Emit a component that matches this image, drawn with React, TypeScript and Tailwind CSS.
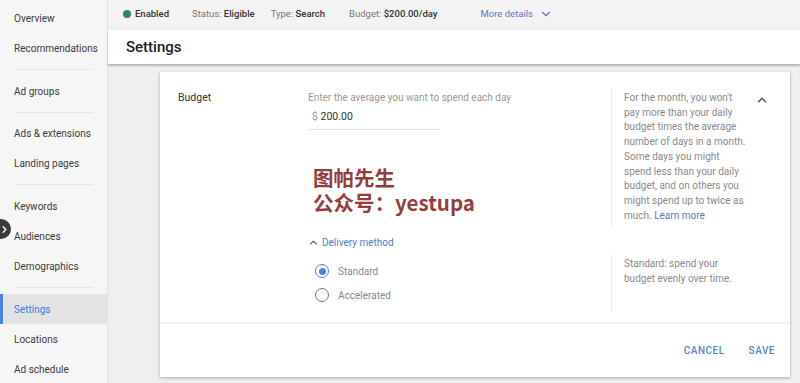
import { ChevronDown, ChevronUp, ChevronRight } from "lucide-react";

const navGroups: string[][] = [
  ["Overview", "Recommendations"],
  ["Ad groups"],
  ["Ads & extensions", "Landing pages"],
  ["Keywords", "Audiences", "Demographics"],
  ["Settings", "Locations", "Ad schedule"],
];

// help text lines, wrapped like the reference
const budgetHelp = [
  "For the month, you won't",
  "pay more than your daily",
  "budget times the average",
  "number of days in a month.",
  "Some days you might",
  "spend less than your daily",
  "budget, and on others you",
  "might spend up to twice as",
];

function Sidebar() {
  return (
    <div className="w-[108px] shrink-0 bg-[#f6f6f6] border-r border-[#e2e2e2] pt-[3px] flex flex-col">
      {navGroups.map((group, gi) => (
        <div key={gi} className="flex flex-col">
          {gi > 0 && (
            <div className={`${gi === 2 ? "h-[12px]" : "h-[13px]"} flex items-center px-[14px]`}>
              <div className="h-px w-full bg-[#e6e6e6]" />
            </div>
          )}
          {group.map((item) => {
            const active = item === "Settings";
            return (
              <div
                key={item}
                className={`h-[30px] flex items-center pl-[14px] text-[10px] relative ${
                  active ? "bg-[#e3e3e3] text-[#3f7be0]" : "text-[#3c3c3c]"
                }`}
              >
                {active && <div className="absolute left-0 top-0 bottom-0 w-[3px] bg-[#4a82e6]" />}
                {item}
              </div>
            );
          })}
        </div>
      ))}
    </div>
  );
}

function StatusBar() {
  return (
    <div className="h-[28px] flex items-center pl-[15px] text-[9.5px] text-[#777] bg-[#f3f3f3]">
      <span className="w-[8px] h-[8px] rounded-full bg-[#2e8b57] mr-[4px]" />
      <span className="text-[#333] font-medium">Enabled</span>
      <span className="ml-[23px]">
        Status: <span className="text-[#333] font-medium">Eligible</span>
      </span>
      <span className="ml-[16px]">
        Type: <span className="text-[#333] font-medium">Search</span>
      </span>
      <span className="ml-[24px]">
        Budget: <span className="text-[#333] font-medium">$200.00/day</span>
      </span>
      <span className="ml-[43px] text-[#5b7ac4] flex items-center">
        More details
        <ChevronDown size={14} strokeWidth={2} className="ml-[6px] text-[#5b7ac4]" />
      </span>
    </div>
  );
}

function Radio({ checked, label }: { checked: boolean; label: string }) {
  return (
    <div className="flex items-center h-[24px]">
      <div
        className={`w-[14px] h-[14px] rounded-full border-[1.5px] flex items-center justify-center ${
          checked ? "border-[#4a82e6]" : "border-[#777]"
        }`}
      >
        {checked && <div className="w-[7px] h-[7px] rounded-full bg-[#4a82e6]" />}
      </div>
      <span className="ml-[9px] text-[10px] text-[#888]">{label}</span>
    </div>
  );
}

function BudgetCard() {
  return (
    <div className="ml-[52px] mr-[10px] mt-[8px] bg-white shadow-[0_1px_3px_rgba(0,0,0,0.3)] flex flex-col h-[305px]">
      <div className="grid grid-cols-[130px_303px_1fr] pl-[18px] pt-[16px]">
        <div className="text-[10.5px] text-[#333] pt-[2px]">Budget</div>
        <div className="flex flex-col">
          <div className="text-[10px] text-[#999] pt-[2px]">Enter the average you want to spend each day</div>
          <div className="w-[132px] border-b border-[#e6e6e6] pl-[4px] pt-[4px] pb-[4px] text-[10.5px] text-[#333]">
            <span className="text-[#999]">$</span> 200.00
          </div>
          <div
            className="mt-[35px] pl-[5px] text-[20.5px] leading-[25px] font-bold text-[#943d3d] flex flex-col"
            style={{ fontFamily: '"Noto Sans CJK SC", "Noto Sans", sans-serif' }}
          >
            <span className="leading-[25px]">图帕先生</span>
            <span className="leading-[25px]">公众号：yestupa</span>
          </div>
        </div>
        <div className="flex h-[140px]">
          <div className="border-l border-[#ececec] pl-[12px] pt-[3px] w-[138px] text-[10px] leading-[14.7px] text-[#8a8a8a] whitespace-nowrap">
            {budgetHelp.map((l) => (
              <div key={l}>{l}</div>
            ))}
            <div>
              much. <span className="text-[#5b7ac4]">Learn more</span>
            </div>
          </div>
          <ChevronUp size={14} strokeWidth={2.5} className="ml-[6px] mt-[5px] text-[#555]" />
        </div>
      </div>

      <div className="grid grid-cols-[130px_303px_1fr] pl-[18px] mt-[7px]">
        <div />
        <div className="flex flex-col">
          <div className="flex items-center text-[10px] text-[#4a7fd0] h-[14px]">
            <ChevronUp size={11} strokeWidth={2.5} className="text-[#555] mr-[3px]" />
            Delivery method
          </div>
          <div className="flex flex-col pl-[7px] mt-[10px]">
            <Radio checked label="Standard" />
            <Radio checked={false} label="Accelerated" />
          </div>
        </div>
        <div className="mt-[19px] h-[58px] border-l border-[#ececec] pl-[12px] pt-[3px] w-[131px] text-[10px] leading-[14.7px] text-[#8a8a8a]">
          Standard: spend your budget evenly over time.
        </div>
      </div>

      <div className="h-[2px] bg-[#f2f2f2] mt-[10px]" />
      <div className="flex-1 flex items-center justify-end pr-[15px] gap-[24px] text-[10px] font-medium tracking-[0.5px] text-[#5b86c8]">
        <span>CANCEL</span>
        <span>SAVE</span>
      </div>
    </div>
  );
}

export default function App() {
  return (
    <div
      className="w-[800px] h-[383px] overflow-hidden flex relative bg-[#efefef]"
      style={{ fontFamily: 'Roboto, "Noto Sans", sans-serif' }}
    >
      <Sidebar />
      <div className="flex-1 flex flex-col">
        <StatusBar />
        <div className="mt-[2px] h-[34px] bg-white flex items-center pl-[18px] shadow-[0_2px_2px_rgba(0,0,0,0.25)]">
          <span className="text-[15px] font-medium text-[#222]">Settings</span>
        </div>
        <BudgetCard />
      </div>
      <div className="absolute left-[-9px] top-[219px] w-[20px] h-[20px] rounded-full bg-[#3a3a3a] flex items-center justify-end pr-[1px]">
        <ChevronRight size={11} strokeWidth={3} className="text-white" />
      </div>
    </div>
  );
}
